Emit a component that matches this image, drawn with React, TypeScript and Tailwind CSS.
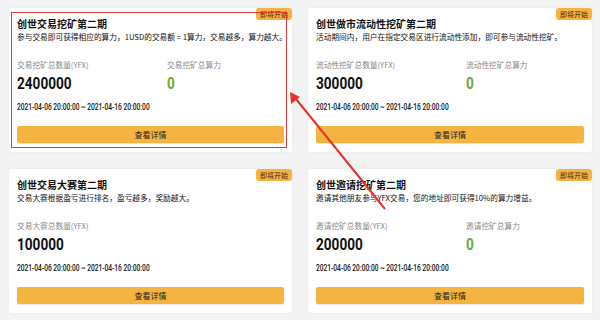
const cards = [
  {
    title: "创世交易挖矿第二期",
    desc: "参与交易即可获得相应的算力，1USD的交易额 = 1算力，交易越多，算力越大。",
    label: "交易挖矿总数量(YFX)",
    amount: "2400000",
    powerLabel: "交易挖矿总算力",
  },
  {
    title: "创世做市流动性挖矿第二期",
    desc: "活动期间内，用户在指定交易区进行流动性添加，即可参与流动性挖矿。",
    label: "流动性挖矿总数量(YFX)",
    amount: "300000",
    powerLabel: "流动性挖矿总算力",
  },
  {
    title: "创世交易大赛第二期",
    desc: "交易大赛根据盈亏进行排名，盈亏越多，奖励越大。",
    label: "交易大赛总数量(YFX)",
    amount: "100000",
    powerLabel: null,
  },
  {
    title: "创世邀请挖矿第二期",
    desc: "邀请其他朋友参与YFX交易，您的地址即可获得10%的算力增益。",
    label: "邀请挖矿总数量(YFX)",
    amount: "200000",
    powerLabel: "邀请挖矿总算力",
  },
];

const cjk = "font-['Noto_Sans_CJK_SC',sans-serif]";
const num = "font-['Roboto','Noto_Sans_CJK_SC',sans-serif]";

function Card({ card }: { card: (typeof cards)[number] }) {
  return (
    <div className="relative flex h-[144px] flex-col rounded-[3px] bg-white px-2 pt-[9px] shadow-[0_0_3px_rgba(0,0,0,0.06)]">
      <span
        className={`absolute top-0 right-0 rounded-[3px] bg-[#f5b342] px-[4px] py-[1px] text-[7px] leading-[10px] text-[#3a2a10] ${cjk}`}
      >
        即将开始
      </span>
      <h3 className={`text-[10px] font-bold leading-[13px] text-[#111] ${cjk}`}>
        {card.title}
      </h3>
      <p className={`mt-[2px] whitespace-nowrap text-[7.7px] leading-[10px] text-[#111] ${cjk}`}>
        {card.desc}
      </p>
      <div className="mt-[18px] grid grid-cols-[150px_1fr]">
        <div>
          <div className={`text-[7.7px] leading-[10px] text-[#8a8a8a] ${cjk}`}>
            {card.label}
          </div>
          <div
            className={`mt-[3px] origin-left scale-x-[0.8] text-[17px] font-bold leading-[20px] text-[#111] ${num}`}
          >
            {card.amount}
          </div>
        </div>
        {card.powerLabel && (
          <div>
            <div className={`text-[7.7px] leading-[10px] text-[#8a8a8a] ${cjk}`}>
              {card.powerLabel}
            </div>
            <div
              className={`mt-[3px] origin-left scale-x-[0.8] text-[17px] font-bold leading-[20px] text-[#6daa3a] ${num}`}
            >
              0
            </div>
          </div>
        )}
      </div>
      <div
        className={`mt-[9px] origin-left scale-x-[0.8] whitespace-nowrap text-[8.3px] font-medium leading-[10px] text-[#111] ${num}`}
      >
        2021-04-06 20:00:00 ~ 2021-04-16 20:00:00
      </div>
      <button
        className={`mt-[14px] h-[17px] rounded-[2px] bg-[#f5b342] text-[8px] leading-[17px] text-[#222] shadow-[0_1px_1px_rgba(0,0,0,0.1)] ${cjk}`}
      >
        查看详情
      </button>
    </div>
  );
}

export default function App() {
  return (
    <div className="relative h-[320px] w-[600px] overflow-hidden bg-[#f3f3f3]">
      <div className="grid grid-cols-[283px_284px] gap-x-[16px] gap-y-[17px] pt-[8px] pl-[9px]">
        {cards.map((c, i) => (
          <Card key={i} card={c} />
        ))}
      </div>
      {/* annotation: red highlight box and arrow */}
      <div className="pointer-events-none absolute top-[12px] left-[11px] h-[136px] w-[276px] border-[1.5px] border-[#e23b36]" />
      <svg className="pointer-events-none absolute inset-0" width="600" height="320">
        <line x1="385" y1="209" x2="296" y2="99" stroke="#e5322b" strokeWidth="2" />
        <polygon points="290,92 291,104 300,97" fill="#e5322b" />
      </svg>
    </div>
  );
}
